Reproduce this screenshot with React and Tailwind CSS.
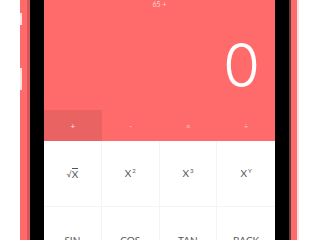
export default function App() {
  const ops = ['+', '-', '×', '÷']
  return (
    <div className="flex h-[240px] w-[320px] overflow-hidden bg-white" style={{ fontFamily: 'Lato, "Open Sans", sans-serif' }}>
      {/* phone body, left */}
      <div className="w-[20px] shrink-0" />
      <div className="flex w-[10px] shrink-0 bg-[#ff6b6b]">
        <div className="flex w-[2px] flex-col">
          <div className="h-[13px]" />
          <div className="h-[12px] bg-[#fbe3e3]" />
          <div className="h-[43px]" />
          <div className="h-[22px] bg-[#fbe3e3]" />
        </div>
        <div className="w-[5px]" />
        <div className="w-[3px] bg-[#d85858]" />
      </div>
      <div className="w-[14px] shrink-0 bg-black" />

      {/* screen */}
      <div className="flex h-[240px] w-[231px] shrink-0 flex-col overflow-hidden">
        <div className="flex h-[110px] shrink-0 flex-col bg-[#ff6b6b]">
          <div className="flex h-[8px] items-center justify-center text-[7px] leading-[8px] text-[#fcd4d4]">65 +</div>
          <div className="flex h-[102px] items-center justify-end pr-[15px] pt-[12px]">
            <span className="text-[60px] font-light leading-none text-white" style={{ fontFamily: 'Inter, sans-serif' }}>0</span>
          </div>
        </div>
        <div className="grid h-[31px] shrink-0 grid-cols-4 bg-[#ff6b6b]">
          {ops.map((o, i) => (
            <div
              key={o}
              className={`flex items-center justify-center text-[8px] ${i === 0 ? 'bg-[#e96363] text-[#fde8e8]' : 'text-[#fcc8c8]'}`}
            >
              {o}
            </div>
          ))}
        </div>
        <div className="grid shrink-0 grid-cols-4 bg-white text-[10px] text-[#555]">
          <div className="flex h-[66px] items-center justify-center border-b border-r border-[#f4f4f4]">
            <span className="text-[8px]">√</span>
            <span className="border-t border-[#555] leading-[11px]">X</span>
          </div>
          <div className="flex h-[66px] items-center justify-center border-b border-r border-[#f4f4f4]">
            X<sup className="ml-[1px] text-[6px]">2</sup>
          </div>
          <div className="flex h-[66px] items-center justify-center border-b border-r border-[#f4f4f4]">
            X<sup className="ml-[1px] text-[6px]">3</sup>
          </div>
          <div className="flex h-[66px] items-center justify-center border-b border-[#f4f4f4]">
            X<sup className="ml-[1px] text-[6px]">Y</sup>
          </div>
          <div className="flex h-[66px] items-center justify-center border-r border-[#f4f4f4]">SIN</div>
          <div className="flex h-[66px] items-center justify-center border-r border-[#f4f4f4]">COS</div>
          <div className="flex h-[66px] items-center justify-center border-r border-[#f4f4f4]">TAN</div>
          <div className="flex h-[66px] items-center justify-center">BACK</div>
        </div>
      </div>

      {/* phone body, right */}
      <div className="w-[14px] shrink-0 bg-black" />
      <div className="w-[2px] shrink-0 bg-[#5a3a3a]" />
      <div className="w-[6px] shrink-0 bg-[#ff6b6b]" />
      <div className="w-[2px] shrink-0 bg-[#fbe3e3]" />
      <div className="flex-1" />
    </div>
  )
}
